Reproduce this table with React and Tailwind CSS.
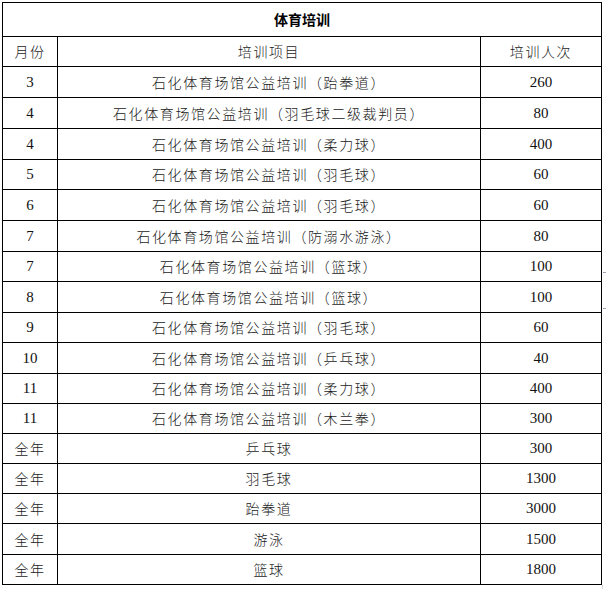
const rows = [
    { m: "3", item: "石化体育场馆公益培训（跆拳道）", n: "260", h: "h-[31px]" },
    { m: "4", item: "石化体育场馆公益培训（羽毛球二级裁判员）", n: "80", h: "h-[31px]" },
    { m: "4", item: "石化体育场馆公益培训（柔力球）", n: "400", h: "h-[31px]" },
    { m: "5", item: "石化体育场馆公益培训（羽毛球）", n: "60", h: "h-[30px]" },
    { m: "6", item: "石化体育场馆公益培训（羽毛球）", n: "60", h: "h-[31px]" },
    { m: "7", item: "石化体育场馆公益培训（防溺水游泳）", n: "80", h: "h-[31px]" },
    { m: "7", item: "石化体育场馆公益培训（篮球）", n: "100", h: "h-[30px]" },
    { m: "8", item: "石化体育场馆公益培训（篮球）", n: "100", h: "h-[31px]" },
    { m: "9", item: "石化体育场馆公益培训（羽毛球）", n: "60", h: "h-[30px]" },
    { m: "10", item: "石化体育场馆公益培训（乒乓球）", n: "40", h: "h-[31px]" },
    { m: "11", item: "石化体育场馆公益培训（柔力球）", n: "400", h: "h-[30px]" },
    { m: "11", item: "石化体育场馆公益培训（木兰拳）", n: "300", h: "h-[30px]" },
    { m: "全年", item: "乒乓球", n: "300", h: "h-[30px]" },
    { m: "全年", item: "羽毛球", n: "1300", h: "h-[30px]" },
    { m: "全年", item: "跆拳道", n: "3000", h: "h-[30px]" },
    { m: "全年", item: "游泳", n: "1500", h: "h-[31px]" },
    { m: "全年", item: "篮球", n: "1800", h: "h-[30px]" },
];

const cjk = "font-['Noto_Sans_CJK_SC',sans-serif] font-light text-[14px] tracking-[1.6px] text-[#1a1a1a]";
const num = "font-['Liberation_Serif','Noto_Sans_CJK_SC',serif] text-[15px] text-[#111]";

function Cell({ className, children }) {
    return (
        <div className={"flex items-center justify-center " + className}>
            {children}
        </div>
    );
}

function isNum(s) {
    return /^\d+$/.test(s);
}

export default function App() {
    return (
        <div className="bg-white w-[606px] h-[589px] pt-[2px] pl-[2px]">
            <div className="flex">
                <div className="w-[601px] border-t border-l border-r border-black">
                    <div className="h-[34px] border-b border-black flex items-center justify-center">
                        <span className="font-['Noto_Sans_CJK_SC',sans-serif] font-bold text-[14px] text-black">
                            体育培训
                        </span>
                    </div>

                    <div className="h-[30px] border-b border-black flex">
                        <Cell className={"w-[55px] border-r border-black " + cjk}>月份</Cell>
                        <Cell className={"w-[423px] border-r border-black " + cjk}>培训项目</Cell>
                        <Cell className={"flex-1 " + cjk}>培训人次</Cell>
                    </div>

                    {rows.map((r, i) => (
                        <div key={i} className={r.h + " border-b border-black flex"}>
                            <Cell className={"w-[55px] border-r border-black " + (isNum(r.m) ? num : cjk)}>
                                {r.m}
                            </Cell>
                            <Cell className={"w-[423px] border-r border-black " + cjk}>{r.item}</Cell>
                            <Cell className={"flex-1 " + num}>{r.n}</Cell>
                        </div>
                    ))}
                </div>
                <div className="flex flex-col">
                    <div className="mt-[270px] ml-px w-[3px] h-px bg-gray-400" />
                    <div className="mt-[35px] ml-px w-[3px] h-px bg-gray-400" />
                </div>
            </div>
            <div className="ml-[600px] w-px h-[4px] bg-gray-300" />
        </div>
    );
}
